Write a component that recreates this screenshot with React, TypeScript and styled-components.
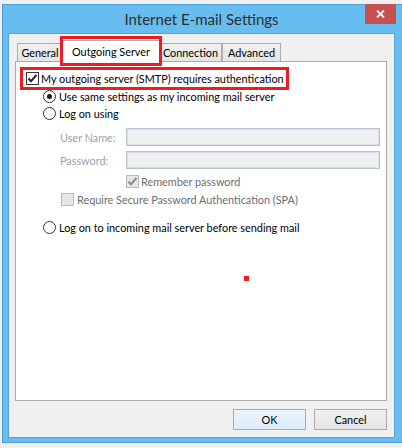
import React from 'react';
import styled, { createGlobalStyle } from 'styled-components';

const FONT = `Lato, "Liberation Sans", sans-serif`;

const GlobalStyle = createGlobalStyle`
  html, body { margin: 0; padding: 0; }
  body { background: #f0f0f0; font-family: ${FONT}; font-size: 10.85px; color: #000; }
  * { box-sizing: border-box; }
`;

const Screen = styled.div`
  width: 402px;
  height: 448px;
  overflow: hidden;
  padding: 4px 0 0 2px;
  background: #f0f0f0;
`;

const Window = styled.div`
  position: relative;
  width: 402px;
  height: 439px;
  background: #67bdf0;
  border: 1px solid #4c9fd8;
  padding: 0 8px 4px 5px;
  display: flex;
  flex-direction: column;
`;

const TitleBar = styled.div`
  height: 28px;
  flex: none;
  display: flex;
  align-items: center;
  justify-content: center;
`;

const Title = styled.span`
  font-size: 15px;
  color: #2e2e2e;
`;

const CloseButton = styled.div`
  position: absolute;
  top: -1px;
  right: 7px;
  width: 31px;
  height: 20px;
  background: #c75050;
  display: flex;
  align-items: center;
  justify-content: center;
`;

const Client = styled.div`
  flex: 1;
  position: relative;
  background: #f0f0f0;
  border: 1px solid #5a9fd6;
  padding: 6px 7px 0 6px;
  display: flex;
  flex-direction: column;
`;

const TabStrip = styled.div`
  display: flex;
  align-items: flex-end;
  height: 22px;
  padding-left: 2px;
  position: relative;
  z-index: 1;
  margin-bottom: -1px;
`;

const Tab = styled.div<{ $active?: boolean; $w: number }>`
  width: ${(p) => p.$w}px;
  height: ${(p) => (p.$active ? 22 : 18)}px;
  margin: ${(p) => (p.$active ? '0 -2px 0 -2px' : '0 0 1px 0')};
  background: ${(p) => (p.$active ? '#fff' : 'linear-gradient(#f0f0f0, #e5e5e5)')};
  border: 1px solid #acacac;
  border-bottom: none;
  display: flex;
  align-items: center;
  justify-content: center;
  position: relative;
  z-index: ${(p) => (p.$active ? 2 : 1)};
  white-space: nowrap;
`;

const Panel = styled.div`
  position: relative;
  height: 340px;
  flex: none;
  background: #fff;
  border: 1px solid #acacac;
  padding: 8px 0 0 10px;
  display: flex;
  flex-direction: column;
`;

const OptionRow = styled.div<{ $indent?: number; $mt?: number; $disabled?: boolean; $gap?: number }>`
  display: flex;
  align-items: center;
  height: 17px;
  margin-left: ${(p) => p.$indent ?? 0}px;
  margin-top: ${(p) => p.$mt ?? 0}px;
  gap: ${(p) => p.$gap ?? 3}px;
  color: ${(p) => (p.$disabled ? '#6d6d6d' : '#000')};
  white-space: nowrap;
`;

const FieldRow = styled.div<{ $mt: number }>`
  display: grid;
  grid-template-columns: 66px 254px;
  align-items: center;
  height: 18px;
  margin-left: 34px;
  margin-top: ${(p) => p.$mt}px;
`;

const FieldLabel = styled.span`
  color: #a0a0a0;
  white-space: nowrap;
`;

const TextBox = styled.div`
  height: 18px;
  background: #f0f0f0;
  border: 1px solid #b5c3d3;
  box-shadow: inset 0 0 0 1px #d8e1ea;
`;

const Box = styled.span<{ $disabled?: boolean }>`
  width: 13px;
  height: 13px;
  flex: none;
  border: 1px solid ${(p) => (p.$disabled ? '#bcbcbc' : '#333')};
  background: ${(p) => (p.$disabled ? '#e6e6e6' : '#fff')};
  display: flex;
  align-items: center;
  justify-content: center;
`;

const Radio = styled.span<{ $on?: boolean }>`
  width: 13px;
  height: 13px;
  flex: none;
  border-radius: 50%;
  border: 1px solid #333;
  background: #fff;
  display: flex;
  align-items: center;
  justify-content: center;
  &::after {
    content: '';
    display: ${(p) => (p.$on ? 'block' : 'none')};
    width: 5px;
    height: 5px;
    border-radius: 50%;
    background: #1a1a1a;
  }
`;

const RedFrame = styled.div<{ $l: number; $t: number; $w: number; $h: number }>`
  position: absolute;
  left: ${(p) => p.$l}px;
  top: ${(p) => p.$t}px;
  width: ${(p) => p.$w}px;
  height: ${(p) => p.$h}px;
  border: 3px solid #ec1c24;
  z-index: 5;
  pointer-events: none;
`;

const RedDot = styled.div`
  position: absolute;
  left: 228px;
  top: 214px;
  width: 5px;
  height: 5px;
  background: #ec1c24;
`;

const ButtonRow = styled.div`
  display: flex;
  justify-content: flex-end;
  gap: 8px;
  margin-top: 8px;
`;

const Button = styled.button<{ $default?: boolean }>`
  width: 73px;
  height: 21px;
  padding: 0;
  font-family: ${FONT};
  font-size: 10.85px;
  color: #000;
  border: 1px solid ${(p) => (p.$default ? '#7eb4ea' : '#acacac')};
  background: ${(p) => (p.$default ? 'linear-gradient(#ecf4fc, #dcecfc)' : 'linear-gradient(#f0f0f0, #e5e5e5)')};
`;

const Check = ({ color = '#222' }: { color?: string }) => (
  <svg width="11" height="11" viewBox="0 0 11 11">
    <path d="M1.5 5.5 L4 8.2 L9.5 1.8" fill="none" stroke={color} strokeWidth="2" />
  </svg>
);

export default function App() {
  return (
    <Screen>
      <GlobalStyle />
      <Window>
        <TitleBar>
          <Title>Internet E-mail Settings</Title>
        </TitleBar>
        <CloseButton>
          <svg width="9" height="8" viewBox="0 0 9 8">
            <path d="M1 0.5 L8 7.5 M8 0.5 L1 7.5" stroke="#fff" strokeWidth="1.8" />
          </svg>
        </CloseButton>
        <Client>
          <RedFrame $l={51} $t={2} $w={102} $h={30} />
          <TabStrip>
            <Tab $w={46}>General</Tab>
            <Tab $w={100} $active>Outgoing Server</Tab>
            <Tab $w={63}>Connection</Tab>
            <Tab $w={59}>Advanced</Tab>
          </TabStrip>
          <Panel>
            <RedFrame $l={4} $t={5} $w={269} $h={23} />
            <OptionRow $gap={2}>
              <Box>
                <Check />
              </Box>
              My outgoing server (SMTP) requires authentication
            </OptionRow>
            <OptionRow $indent={17} $mt={1}>
              <Radio $on />
              Use same settings as my incoming mail server
            </OptionRow>
            <OptionRow $indent={17}>
              <Radio />
              Log on using
            </OptionRow>
            <FieldRow $mt={6}>
              <FieldLabel>User Name:</FieldLabel>
              <TextBox />
            </FieldRow>
            <FieldRow $mt={5}>
              <FieldLabel>Password:</FieldLabel>
              <TextBox />
            </FieldRow>
            <OptionRow $indent={100} $mt={4} $disabled $gap={2}>
              <Box $disabled>
                <Check color="#8a8a8a" />
              </Box>
              Remember password
            </OptionRow>
            <OptionRow $indent={35} $mt={1} $disabled>
              <Box $disabled />
              Require Secure Password Authentication (SPA)
            </OptionRow>
            <OptionRow $indent={17} $mt={11}>
              <Radio />
              Log on to incoming mail server before sending mail
            </OptionRow>
            <RedDot />
          </Panel>
          <ButtonRow>
            <Button $default>OK</Button>
            <Button>Cancel</Button>
          </ButtonRow>
        </Client>
      </Window>
    </Screen>
  );
}
